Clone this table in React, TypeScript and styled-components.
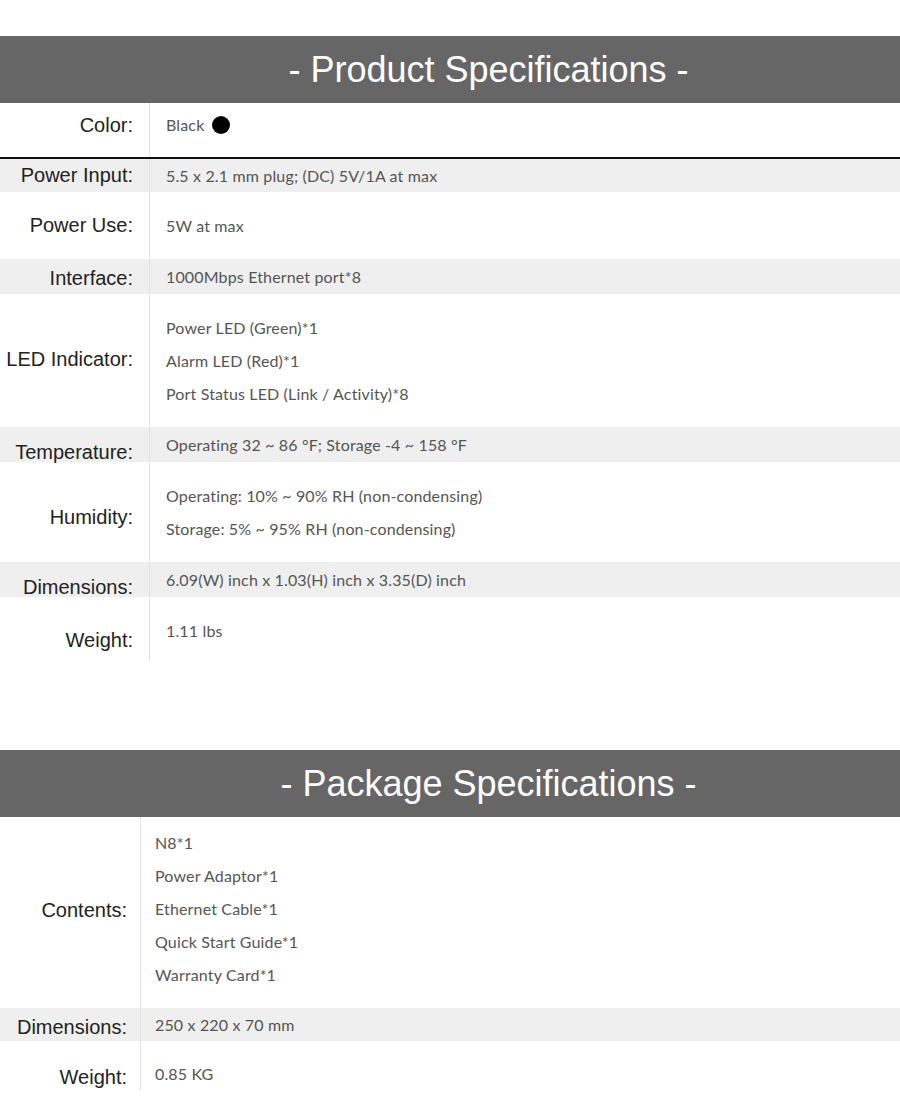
import React from "react";
import styled, { createGlobalStyle } from "styled-components";

const Global = createGlobalStyle`
  html, body { margin: 0; padding: 0; background: #fff; }
  body { font-family: "Liberation Sans", Arial, sans-serif; }
`;

const Page = styled.div`
  width: 900px;
  padding-top: 36px;
  display: flex;
  flex-direction: column;
`;

const Section = styled.section<{ $gap?: number }>`
  display: flex;
  flex-direction: column;
  margin-bottom: ${(p) => p.$gap ?? 0}px;
`;

const Banner = styled.h2`
  margin: 0;
  height: 67px;
  background: #666666;
  color: #ffffff;
  font-family: "Liberation Sans", Arial, sans-serif;
  font-weight: 400;
  font-size: 36px;
  display: flex;
  align-items: center;
  justify-content: center;
  padding-left: 77px;
  box-sizing: border-box;
`;

const Table = styled.div`
  display: flex;
  flex-direction: column;
`;

const Row = styled.div<{ $shade?: boolean; $labelW: number; $rule?: boolean }>`
  display: grid;
  grid-template-columns: ${(p) => p.$labelW}px 1fr;
  background: ${(p) => (p.$shade ? "#efefef" : "#ffffff")};
  border-bottom: ${(p) => (p.$rule ? "2px solid #111" : "none")};
`;

const Label = styled.div<{ $shift: number; $pr: number }>`
  display: flex;
  align-items: center;
  justify-content: flex-end;
  padding-right: ${(p) => p.$pr}px;
  transform: translateY(${(p) => p.$shift}px);
  font-size: 20px;
  line-height: 23px;
  color: #222;
  white-space: nowrap;
`;

const Value = styled.div<{ $pt: number; $pb: number; $pl: number }>`
  border-left: 1px solid #e2e2e2;
  padding: ${(p) => p.$pt}px 0 ${(p) => p.$pb}px ${(p) => p.$pl}px;
  display: flex;
  flex-direction: column;
`;

const Line = styled.div`
  height: 33px;
  line-height: 33px;
  font-family: Lato, "Open Sans", sans-serif;
  font-size: 16px;
  letter-spacing: 0.15px;
  color: #555;
  display: flex;
  align-items: center;
  gap: 8px;
  white-space: nowrap;
`;

const Dot = styled.span`
  width: 18px;
  height: 18px;
  border-radius: 50%;
  background: #000;
  display: inline-block;
`;

type Spec = {
  label: string;
  lines: React.ReactNode[];
  shade?: boolean;
  pt: number;
  pb: number;
  shift: number;
  rule?: boolean;
};

const product: Spec[] = [
  { label: "Color:", lines: [<>Black <Dot /></>], pt: 5, pb: 16, shift: -5, rule: true },
  { label: "Power Input:", lines: ["5.5 x 2.1 mm plug; (DC) 5V/1A at max"], shade: true, pt: 0, pb: 0, shift: 0 },
  { label: "Power Use:", lines: ["5W at max"], pt: 17, pb: 17, shift: 0 },
  { label: "Interface:", lines: ["1000Mbps Ethernet port*8"], shade: true, pt: 1, pb: 1, shift: 1.5 },
  {
    label: "LED Indicator:",
    lines: ["Power LED (Green)*1", "Alarm LED (Red)*1", "Port Status LED (Link / Activity)*8"],
    pt: 17,
    pb: 17,
    shift: -1.5,
  },
  { label: "Temperature:", lines: ["Operating 32 ~ 86 °F; Storage -4 ~ 158 °F"], shade: true, pt: 1, pb: 1, shift: 7.5 },
  {
    label: "Humidity:",
    lines: ["Operating: 10% ~ 90% RH (non-condensing)", "Storage: 5% ~ 95% RH (non-condensing)"],
    pt: 17,
    pb: 17,
    shift: 5,
  },
  { label: "Dimensions:", lines: ["6.09(W) inch x 1.03(H) inch x 3.35(D) inch"], shade: true, pt: 1, pb: 1, shift: 7.5 },
  { label: "Weight:", lines: ["1.11 lbs"], pt: 17, pb: 13, shift: 11.5 },
];

const pkg: Spec[] = [
  {
    label: "Contents:",
    lines: ["N8*1", "Power Adaptor*1", "Ethernet Cable*1", "Quick Start Guide*1", "Warranty Card*1"],
    pt: 9,
    pb: 17,
    shift: -2.5,
  },
  { label: "Dimensions:", lines: ["250 x 220 x 70 mm"], shade: true, pt: 0, pb: 0, shift: 2.5 },
  { label: "Weight:", lines: ["0.85 KG"], pt: 16, pb: 0, shift: 11.5 },
];

function SpecTable({ rows, labelW, pr, pl }: { rows: Spec[]; labelW: number; pr: number; pl: number }) {
  return (
    <Table>
      {rows.map((r) => (
        <Row key={r.label} $shade={r.shade} $labelW={labelW} $rule={r.rule}>
          <Label $shift={r.shift} $pr={pr}>{r.label}</Label>
          <Value $pt={r.pt} $pb={r.pb} $pl={pl}>
            {r.lines.map((l, i) => (
              <Line key={i}>{l}</Line>
            ))}
          </Value>
        </Row>
      ))}
    </Table>
  );
}

export default function App() {
  return (
    <>
      <Global />
      <Page>
        <Section $gap={90}>
          <Banner>- Product Specifications -</Banner>
          <SpecTable rows={product} labelW={149} pr={16} pl={16} />
        </Section>
        <Section>
          <Banner>- Package Specifications -</Banner>
          <SpecTable rows={pkg} labelW={140} pr={13} pl={14} />
        </Section>
      </Page>
    </>
  );
}
